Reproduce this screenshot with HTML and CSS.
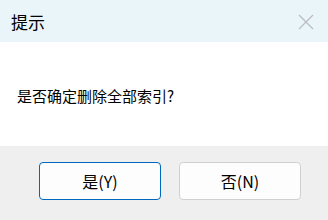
FILE: index.html
```html
<!DOCTYPE html>
<html>
<head>
    <title>提示</title>
    <link rel="stylesheet" href="styles.css">
</head>
<body>
    <div class="dialog">
        <div class="title-bar">
            <span class="title">提示</span>
            <svg class="close" width="16" height="16" viewBox="0 0 16 16">
                <path d="M1 1 L15 15 M15 1 L1 15" stroke="#b8bcbe" stroke-width="1.2" fill="none"/>
            </svg>
        </div>
        <div class="message">是否确定删除全部索引?</div>
        <div class="footer">
            <button class="dlg-btn default">是(Y)</button>
            <button class="dlg-btn">否(N)</button>
        </div>
    </div>
</body>
</html>
```

FILE: styles.css
```css
body {
    margin: 0;
    width: 328px;
    height: 220px;
    overflow: hidden;
    font-family: "Noto Sans CJK SC", "Liberation Sans", sans-serif;
    background-color: #ffffff;
}
.dialog {
    display: flex;
    flex-direction: column;
    height: 220px;
}
.title-bar {
    height: 42px;
    background-color: #eaf5fa;
    display: flex;
    align-items: center;
    justify-content: space-between;
    padding: 0 14px 0 11px;
}
.title {
    font-size: 17px;
    color: #000000;
}
.close {
    display: block;
    margin-top: 1px;
}
.message {
    height: 104px;
    box-sizing: border-box;
    padding: 44px 0 0 17px;
    font-size: 15px;
    line-height: 20px;
    color: #000000;
}
.footer {
    flex: 1;
    background-color: #efefef;
    display: flex;
    justify-content: flex-end;
    gap: 18px;
    padding: 16px 27px 0 0;
}
.dlg-btn {
    width: 122px;
    height: 38px;
    border: 1px solid #d0d0d0;
    border-radius: 4px;
    background-color: #fdfdfd;
    font-family: "Noto Sans CJK SC", "Liberation Sans", sans-serif;
    font-size: 16px;
    color: #000000;
    padding: 0;
}
.dlg-btn.default {
    border-color: #0067c0;
}
```
